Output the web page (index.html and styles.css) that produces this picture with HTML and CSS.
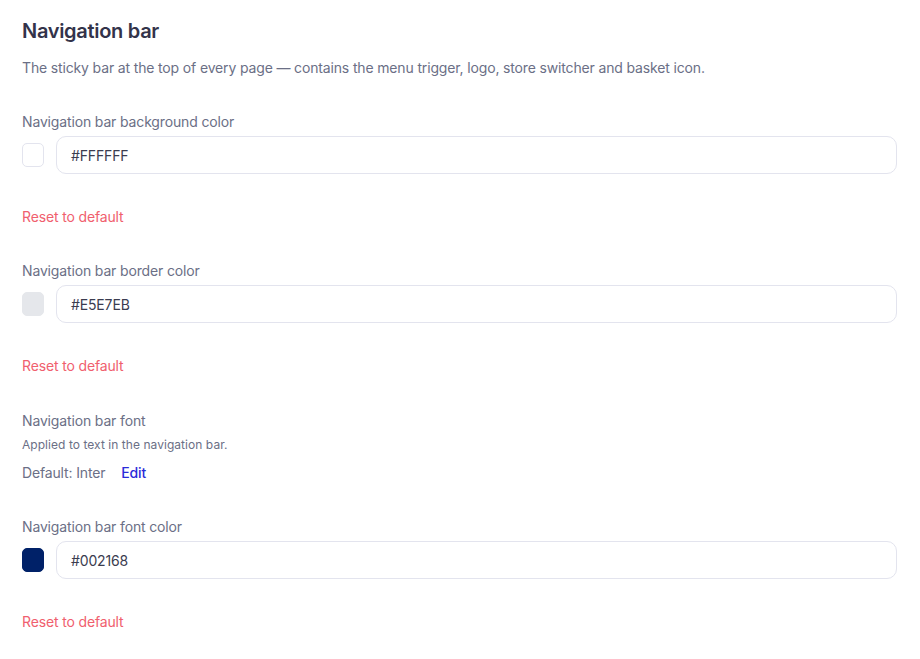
FILE: index.html
```html
<!DOCTYPE html>
<html>
<head>
<meta charset="utf-8">
<link rel="stylesheet" href="styles.css">
</head>
<body>
<div class="panel">
  <h1 class="title">Navigation bar</h1>
  <p class="desc">The sticky bar at the top of every page — contains the menu trigger, logo, store switcher and basket icon.</p>

  <div class="field">
    <div class="label">Navigation bar background color</div>
    <div class="color-row">
      <span class="swatch swatch-white"></span>
      <div class="input">#FFFFFF</div>
    </div>
    <a class="reset">Reset to default</a>
  </div>

  <div class="field">
    <div class="label">Navigation bar border color</div>
    <div class="color-row">
      <span class="swatch swatch-gray"></span>
      <div class="input">#E5E7EB</div>
    </div>
    <a class="reset">Reset to default</a>
  </div>

  <div class="field font-field">
    <div class="label">Navigation bar font</div>
    <div class="hint">Applied to text in the navigation bar.</div>
    <div class="font-row">
      <span class="font-default">Default: Inter</span>
      <a class="edit">Edit</a>
    </div>
  </div>

  <div class="field">
    <div class="label">Navigation bar font color</div>
    <div class="color-row">
      <span class="swatch swatch-navy"></span>
      <div class="input">#002168</div>
    </div>
    <a class="reset">Reset to default</a>
  </div>
</div>
</body>
</html>
```
FILE: styles.css
```css
html, body {
  margin: 0;
  padding: 0;
  background: #ffffff;
}
body {
  font-family: Inter, "Liberation Sans", sans-serif;
  color: #6b6f86;
}
.panel {
  padding: 18px 23px 0 22px;
  display: flex;
  flex-direction: column;
}
.title {
  margin: 0;
  font-size: 20px;
  line-height: 26px;
  font-weight: 600;
  letter-spacing: -0.3px;
  color: #33334a;
}
.desc {
  margin: 14px 0 0;
  font-size: 14px;
  line-height: 20px;
  letter-spacing: -0.15px;
  color: #6b6f86;
}
.field {
  display: flex;
  flex-direction: column;
  margin-top: 34px;
  letter-spacing: -0.15px;
}
.font-field {
  margin-top: 35px;
}
.label {
  font-size: 14px;
  line-height: 20px;
  color: #6b6f86;
}
.color-row {
  display: flex;
  align-items: center;
  gap: 12px;
  margin-top: 4px;
}
.swatch {
  width: 20px;
  height: 22px;
  border-radius: 5px;
  border: 1px solid #e3e4ee;
  flex: none;
}
.swatch-white { background: #ffffff; }
.swatch-gray { background: #e5e7eb; border-color: #e5e7eb; }
.swatch-navy { background: #002168; border-color: #002168; }
.input {
  flex: 1;
  height: 36px;
  box-sizing: content-box;
  border: 1px solid #e3e4ee;
  border-radius: 10px;
  padding: 0 14px;
  display: flex;
  align-items: center;
  font-size: 14px;
  color: #3b3c4f;
}
.reset {
  margin-top: 33px;
  font-size: 14px;
  line-height: 20px;
  color: #f0606e;
  align-self: flex-start;
}
.hint {
  margin-top: 6px;
  font-size: 12px;
  line-height: 16px;
  letter-spacing: 0.05px;
  color: #6b6f86;
}
.font-row {
  display: flex;
  gap: 16px;
  margin-top: 10px;
  font-size: 14px;
  line-height: 20px;
}
.font-default { color: #6b6f86; }
.edit { color: #2b2bd9; font-weight: 500; }
```
